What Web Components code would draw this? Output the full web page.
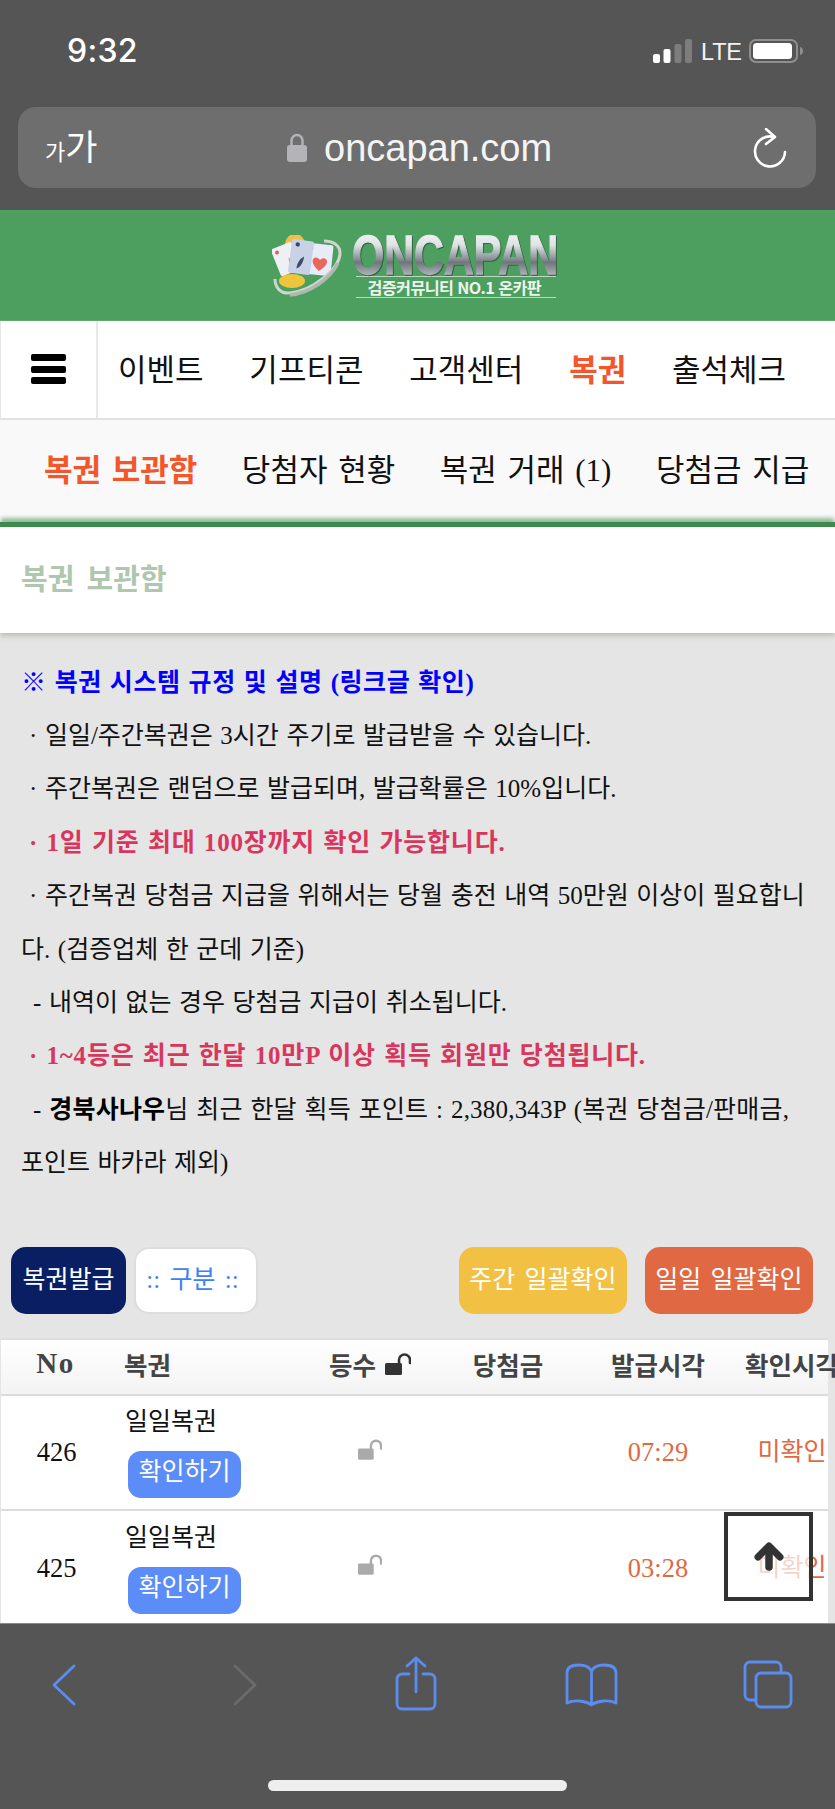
<!DOCTYPE html>
<html lang="ko"><head><meta charset="utf-8"><title>ONCAPAN</title>
<style>
html,body{margin:0;padding:0;background:#555}
body{width:835px;height:1809px;overflow:hidden;font-family:"Liberation Serif","Noto Sans CJK KR",serif;display:flex;flex-direction:column}
</style></head><body>
<ios-top></ios-top>
<site-page>
  <site-logo></site-logo>
  <main-nav>
    <nav-link>이벤트</nav-link><nav-link>기프티콘</nav-link><nav-link>고객센터</nav-link><nav-link active>복권</nav-link><nav-link>출석체크</nav-link>
  </main-nav>
  <sub-nav>
    <nav-link active>복권 보관함</nav-link><nav-link>당첨자 현황</nav-link><nav-link>복권 거래 (1)</nav-link><nav-link>당첨금 지급</nav-link>
  </sub-nav>
  <page-title>복권 보관함</page-title>
  <notice-box></notice-box>
  <action-bar></action-bar>
  <lotto-table>
    <lotto-row no="426" issued="07:29"></lotto-row>
    <lotto-row no="425" issued="03:28"></lotto-row>
  </lotto-table>
  <scroll-top></scroll-top>
</site-page>
<ios-bottom></ios-bottom>
<script>
const def=(name,html)=>customElements.define(name,class extends HTMLElement{
  constructor(){super();this.attachShadow({mode:'open'}).innerHTML=typeof html==='function'?html(this):html}
  connectedCallback(){if(typeof html==='function')this.shadowRoot.innerHTML=html(this)}
});
const KR='"Liberation Serif","Noto Sans CJK KR",serif';
const lockOpen=(c,w,h)=>`<svg width="${w}" height="${h}" viewBox="0 0 26 22"><path d="M14 11V7a5.5 5.5 0 0 1 11 0v3" fill="none" stroke="${c}" stroke-width="2.6" stroke-linecap="round"/><rect x="0" y="10" width="17" height="12" rx="1.5" fill="${c}"/></svg>`;

def('ios-top',`<style>
:host{display:block;height:210px;background:#555;color:#fff;box-sizing:border-box}
.status{height:107px;box-sizing:border-box;padding:33px 32px 0 67px;display:flex;justify-content:space-between;align-items:flex-start}
.time{font:500 32px/36px "Inter","Liberation Sans",sans-serif;letter-spacing:.3px}
.right{display:flex;align-items:flex-start;padding-top:6px}
.lte{font:400 23.500px/24px "Liberation Sans",sans-serif;margin:1px 10px 0 9px;width:38px;color:#f2f2f2;white-space:nowrap;letter-spacing:-.2px}
svg{display:block}
.url{margin:0 19px 0 18px;height:81px;background:#6e6e6e;border-radius:18px;display:flex;align-items:center;position:relative;padding-left:27px}
.aa{width:56px;font:400 35px/36px "Noto Sans CJK KR",sans-serif;color:#fff;white-space:nowrap;letter-spacing:-.5px}
.aa small{font-size:22px;letter-spacing:0}
.mid{margin-left:186px;display:flex;align-items:center;gap:17px}
.host{font:400 38px/44px "Liberation Sans",sans-serif;color:#f4f4f4;margin-top:1px}
.rel{margin-left:auto;margin-right:29px}
</style>
<div class="status"><div class="time">9:32</div>
<div class="right">
<svg width="39" height="24" viewBox="0 0 39 24"><rect x="0" y="15" width="7" height="9" rx="2" fill="#fff"/><rect x="10.5" y="10" width="7" height="14" rx="2" fill="#fff"/><rect x="21.5" y="5" width="7" height="19" rx="2" fill="#7d7d7d"/><rect x="32" y="0" width="7" height="24" rx="2" fill="#7d7d7d"/></svg>
<div class="lte">LTE</div>
<svg width="54" height="24" viewBox="0 0 54 24"><rect x="1" y="1" width="47" height="22" rx="6" fill="none" stroke="#8f8f8f" stroke-width="2"/><rect x="4" y="4" width="39" height="16" rx="3.5" fill="#fff"/><path d="M51 8c2 .5 3 2 3 4s-1 3.500-3 4z" fill="#8f8f8f"/></svg>
</div></div>
<div class="url">
<div class="aa"><small>가</small>가</div>
<div class="mid">
<svg width="20" height="29" viewBox="0 0 20 29"><path d="M4.500 13V7.500a5.500 5.500 0 0 1 11 0V13" fill="none" stroke="#b4b4b8" stroke-width="2.400"/><rect x="0" y="12" width="20" height="17" rx="3" fill="#b4b4b8"/></svg>
<div class="host">oncapan.com</div></div>
<svg class="rel" width="34" height="40" viewBox="0 0 34 40"><path d="M13 1l9 8-9 7M21 9A15 15 0 1 0 32 24" fill="none" stroke="#fff" stroke-width="2.600" stroke-linecap="round" stroke-linejoin="round"/></svg>
</div>`);

def('site-page',`<style>
:host{display:block;position:relative;height:1413px;overflow:hidden;background:#e5e5e5;color:#000;font-family:${KR}}
</style><slot></slot>`);

def('site-logo',`<style>
:host{display:flex;justify-content:center;height:111px;box-sizing:border-box;padding:25px 0 0 0;background:#4c9f5e;border-bottom:1px solid #5cab6d}
.wrap{display:flex;gap:11px;height:62px;margin-left:-3px}
svg{display:block;flex:none}
.t{width:208px}
.name{display:block;margin-left:-2px;overflow:visible;filter:drop-shadow(1.500px 1.500px 0 rgba(40,60,50,.6))}
.name text{font:700 55px "Liberation Sans",sans-serif}
.sub{margin:0 0 0 3px;width:200px;box-sizing:content-box;border-top:1px solid #bcd9c2;border-bottom:1px solid #bcd9c2;height:20px;font:700 16.200px/20px "Noto Sans CJK KR",sans-serif;color:#eef4ee;text-indent:12px;white-space:nowrap;letter-spacing:-.6px}
</style>
<div class="wrap">
<svg width="70" height="62" viewBox="0 0 70 62">
<circle cx="23" cy="9" r="10" fill="#eec04a"/>
<g transform="rotate(-22 13 24)"><rect x="3" y="10" width="22" height="29" rx="2" fill="#eef0f6"/><circle cx="8" cy="15" r="2" fill="#e0604f"/><path d="M17 24l3 6-3 5-2-5z" fill="#d8604f"/></g>
<g transform="rotate(6 47 25)"><rect x="33" y="9" width="27" height="31" rx="2" fill="#e9ecf6"/><circle cx="38" cy="14" r="2.200" fill="#e0604f"/><path d="M48 36c-5-4-8-7-7-11 1-3 5-3 7 0 2-3 6-3 7 0 1 4-2 7-7 11z" fill="#e9685b"/></g>
<g transform="rotate(8 29 22)"><rect x="18" y="5" width="22" height="34" rx="2" fill="#c9d1e6"/><circle cx="24" cy="10" r="2.200" fill="#3c4a66"/><path d="M32 21c-4 3-6 7-6 13 4-2 6-7 6-13z" fill="#3c4a66"/></g>
<ellipse cx="20" cy="46" rx="13" ry="7" fill="#f0c53e"/>
<path d="M52 6c10 0 16 5 16 12 0 16-28 38-50 40C8 59 3 52 3 44" fill="none" stroke="#cfd6d0" stroke-width="3"/>
<path d="M66 28C58 44 38 58 18 60" fill="none" stroke="#aeb9b0" stroke-width="3.500"/>
</svg>
<div class="t">
<svg class="name" width="210" height="41" viewBox="0 0 210 41">
<defs><linearGradient id="silver" x1="0" y1="0" x2="0" y2="1"><stop offset=".05" stop-color="#f7f8f9"/><stop offset=".34" stop-color="#dfe3e6"/><stop offset=".56" stop-color="#8a9298"/><stop offset=".62" stop-color="#6f767c"/><stop offset=".95" stop-color="#d5d9dc"/></linearGradient></defs>
<text x="1" y="39" textLength="206" lengthAdjust="spacingAndGlyphs" fill="url(#silver)" stroke="url(#silver)" stroke-width="1.300">ONCAPAN</text></svg>
<div class="sub">검증커뮤니티 NO.1 온카판</div></div>
</div>`);

def('main-nav',`<style>
:host{display:flex;height:99px;background:#fff;border-left:1px solid #e6e6e6;border-bottom:2px solid #e2e2e2;box-sizing:border-box;overflow:hidden}
.menu{flex:none;width:97px;border-right:2px solid #e8e8e8;display:flex;flex-direction:column;gap:4.500px;padding:33px 0 0 30px;box-sizing:border-box}
.menu i{display:block;width:35px;height:7px;border-radius:2px;background:#000}
.items{display:flex;gap:45.800px;padding:3px 0 0 20px;align-items:center;box-sizing:border-box;--size:31px}
</style><div class="menu"><i></i><i></i><i></i></div><div class="items"><slot></slot></div>`);

def('nav-link',h=>`<style>
:host{display:block;white-space:nowrap;flex:none;font-size:var(--size,31px);line-height:36px;color:${h.hasAttribute('active')?'#f2562a':'#111'};font-weight:${h.hasAttribute('active')?700:400};word-spacing:var(--ws,0)}
</style><slot></slot>`);

def('sub-nav',`<style>
:host{display:flex;gap:44.500px;height:102px;padding:0 0 0 44px;box-sizing:border-box;align-items:center;background:#f9f9f9;overflow:hidden;--size:31px;--ws:3px}
</style><slot></slot>`);

def('page-title',`<style>
:host{display:block;position:relative;height:111px;background:#fff;border-top:5px solid #3d8a4d;box-shadow:0 -5px 4px -1px rgba(61,138,77,.55),0 3px 5px rgba(90,90,70,.28);padding:33px 0 0 21px;box-sizing:border-box;color:#afc6af;font-weight:700;font-size:29px;line-height:40px;word-spacing:5px}
</style><slot></slot>`);

def('notice-box',`<style>
:host{display:block;padding:22.600px 20px 0 21px;font-size:25px;line-height:53.400px;color:#111;box-sizing:border-box;word-spacing:1.300px}
p{margin:0;white-space:nowrap}
.b{color:#0000ff;font-weight:700;letter-spacing:.55px}
.r{color:#d9365e;font-weight:700;letter-spacing:.8px}
.in{padding-left:8px}.in2{padding-left:12px}
.w{letter-spacing:.2px}
b{color:#000}
</style>
<p class="b">※ 복권 시스템 규정 및 설명 (링크글 확인)</p>
<p class="in">· 일일/주간복권은 3시간 주기로 발급받을 수 있습니다.</p>
<p class="in">· 주간복권은 랜덤으로 발급되며, 발급확률은 10%입니다.</p>
<p class="in r">· 1일 기준 최대 100장까지 확인 가능합니다.</p>
<p class="in">· 주간복권 당첨금 지급을 위해서는 당월 충전 내역 50만원 이상이 필요합니</p>
<p>다. (검증업체 한 군데 기준)</p>
<p class="in2">- 내역이 없는 경우 당첨금 지급이 취소됩니다.</p>
<p class="in r">· 1~4등은 최근 한달 10만P 이상 획득 회원만 당첨됩니다.</p>
<p class="in2 w">- <b>경북사나우</b>님 최근 한달 획득 포인트 : 2,380,343P (복권 당첨금/판매금,</p>
<p>포인트 바카라 제외)</p>`);

def('action-bar',`<style>
:host{display:flex;height:67px;margin-top:57px;padding:0 22px 0 11px;gap:8px;font-size:25px;line-height:65px;color:#fff}
div{border-radius:15px;box-sizing:border-box;text-align:center;white-space:nowrap;height:67px}
.a{width:115px;background:#0a1f63}
.s{width:124px;background:#fff;border:2px solid #ddd;color:#3b82f6;font-size:25px;line-height:61px;word-spacing:3px;padding-right:7px}
.g{flex:1}
.y{width:168px;background:#f2c144;word-spacing:3px}
.o{width:168px;background:#e06944;word-spacing:3px;margin-left:10px}
</style><div class="a">복권발급</div><div class="s">:: 구분 ::</div><div class="g"></div><div class="y">주간 일괄확인</div><div class="o">일일 일괄확인</div>`);

def('lotto-table',`<style>
:host{display:block;margin:24px 7px 0 1px;background:#fff;border-top:2px solid #dedede;--cols:109px 180px 160px 116px 184px 78px}
.h{display:grid;grid-template-columns:var(--cols);height:48px;align-items:center;background:linear-gradient(#fff,#f3f3f3);border-bottom:2px solid #dcdcdc;font-weight:700;font-size:25.500px;color:#444;padding-bottom:6px;box-sizing:content-box}
.h span{justify-self:center;white-space:nowrap;display:inline-flex;align-items:center;gap:9px}
.h span.l{justify-self:start;padding-left:14px}
.h span.w{justify-self:start;margin-left:-5px}
.h span.no{font-size:29px;letter-spacing:1.500px}
svg{display:block}
</style>
<div class="h"><span class="no">No</span><span class="l">복권</span><span>등수 ${lockOpen('#333',26,22)}</span><span>당첨금</span><span>발급시각</span><span class="w">확인시각</span></div>
<slot></slot>`);

def('lotto-row',h=>`<style>
:host{display:grid;grid-template-columns:109px 180px 160px 116px 184px 78px;height:115.500px;box-sizing:border-box;border-bottom:2px solid #dcdcdc;align-items:center;background:#fff;font-size:25px;line-height:30px;color:#111}
.c{justify-self:center;white-space:nowrap}
.n{font-size:26.500px;padding-left:2px}
.t{padding-left:15px;padding-top:1px}
.t .k{color:#111}
.btn{margin:14px 0 0 3px;width:113px;height:47px;background:#5b8cf7;border-radius:13px;color:#fff;text-align:center;line-height:42px}
.o{color:#e06944;font-size:26.500px}
.m{color:#e06944;padding-left:6px;justify-self:center;white-space:nowrap}
.lk{padding-bottom:6px}
svg{display:block}
</style>
<div class="c n">${h.getAttribute('no')||''}</div>
<div class="t"><div class="k">일일복권</div><div class="btn">확인하기</div></div>
<div class="c lk">${lockOpen('#aaa',24,21)}</div>
<div></div>
<div class="c o">${h.getAttribute('issued')||''}</div>
<div class="m">미확인</div>`);

def('scroll-top',`<style>
:host{position:absolute;left:724px;top:1302px;width:89px;height:89px;box-sizing:border-box;border:4px solid #333;background:rgba(255,255,255,.7);display:flex;align-items:center;justify-content:center}
svg{display:block}
</style><svg width="30" height="29" viewBox="0 0 30 29"><path d="M4 15L15 4l11 11" fill="none" stroke="#333" stroke-width="7" stroke-linecap="round" stroke-linejoin="round"/><path d="M15 8v17" fill="none" stroke="#333" stroke-width="7.500" stroke-linecap="round"/></svg>`);

def('ios-bottom',`<style>
:host{display:block;height:186px;background:#555;border-top:1px solid #8a8a8a;box-sizing:border-box;position:relative}
.bar{display:flex;align-items:flex-start;height:100px;position:relative;padding:32px 0 0 52px;box-sizing:border-box}
svg{display:block;flex:none;fill:none;stroke:#5b8cf0;stroke-width:2.800;stroke-linecap:round;stroke-linejoin:round}
.back{margin-top:8px}.fwd{margin:8px 0 0 157px;stroke:#6b6b6b}
.share{margin:0 0 0 138px}.book{margin:7px 0 0 128px}.tabs{margin:4px 0 0 125px}
.home{width:299px;height:11px;border-radius:6px;background:#eee;margin:56px 0 0 268px}
</style>
<div class="bar">
<svg class="back" width="24" height="42" viewBox="0 0 24 42"><path d="M22 2L2 21l20 19" /></svg>
<svg class="fwd" width="24" height="42" viewBox="0 0 24 42"><path d="M2 2l20 19L2 40"/></svg>
<svg class="share" width="42" height="55" viewBox="0 0 42 55"><path d="M21 2v34M12 10l9-8 9 8M14 18H7a5 5 0 0 0-5 5v25a5 5 0 0 0 5 5h28a5 5 0 0 0 5-5V23a5 5 0 0 0-5-5h-7"/></svg>
<svg class="book" width="53" height="44" viewBox="0 0 53 44"><path d="M26.500 8v34M26.500 8C24 3 20 2 14 2 7 2 2 4 2 10v30c6-3 18-3 24.500 2C33 37 45 37 51 40V10c0-6-5-8-12-8-6 0-10 1-12.500 6z"/></svg>
<svg class="tabs" width="50" height="49" viewBox="0 0 50 49"><path d="M38 13V7a5 5 0 0 0-5-5H7a5 5 0 0 0-5 5v28a5 5 0 0 0 5 5h5"/><rect x="13" y="13" width="35" height="34" rx="5"/></svg>
</div>
<div class="home"></div>`);
</script>
</body></html>
